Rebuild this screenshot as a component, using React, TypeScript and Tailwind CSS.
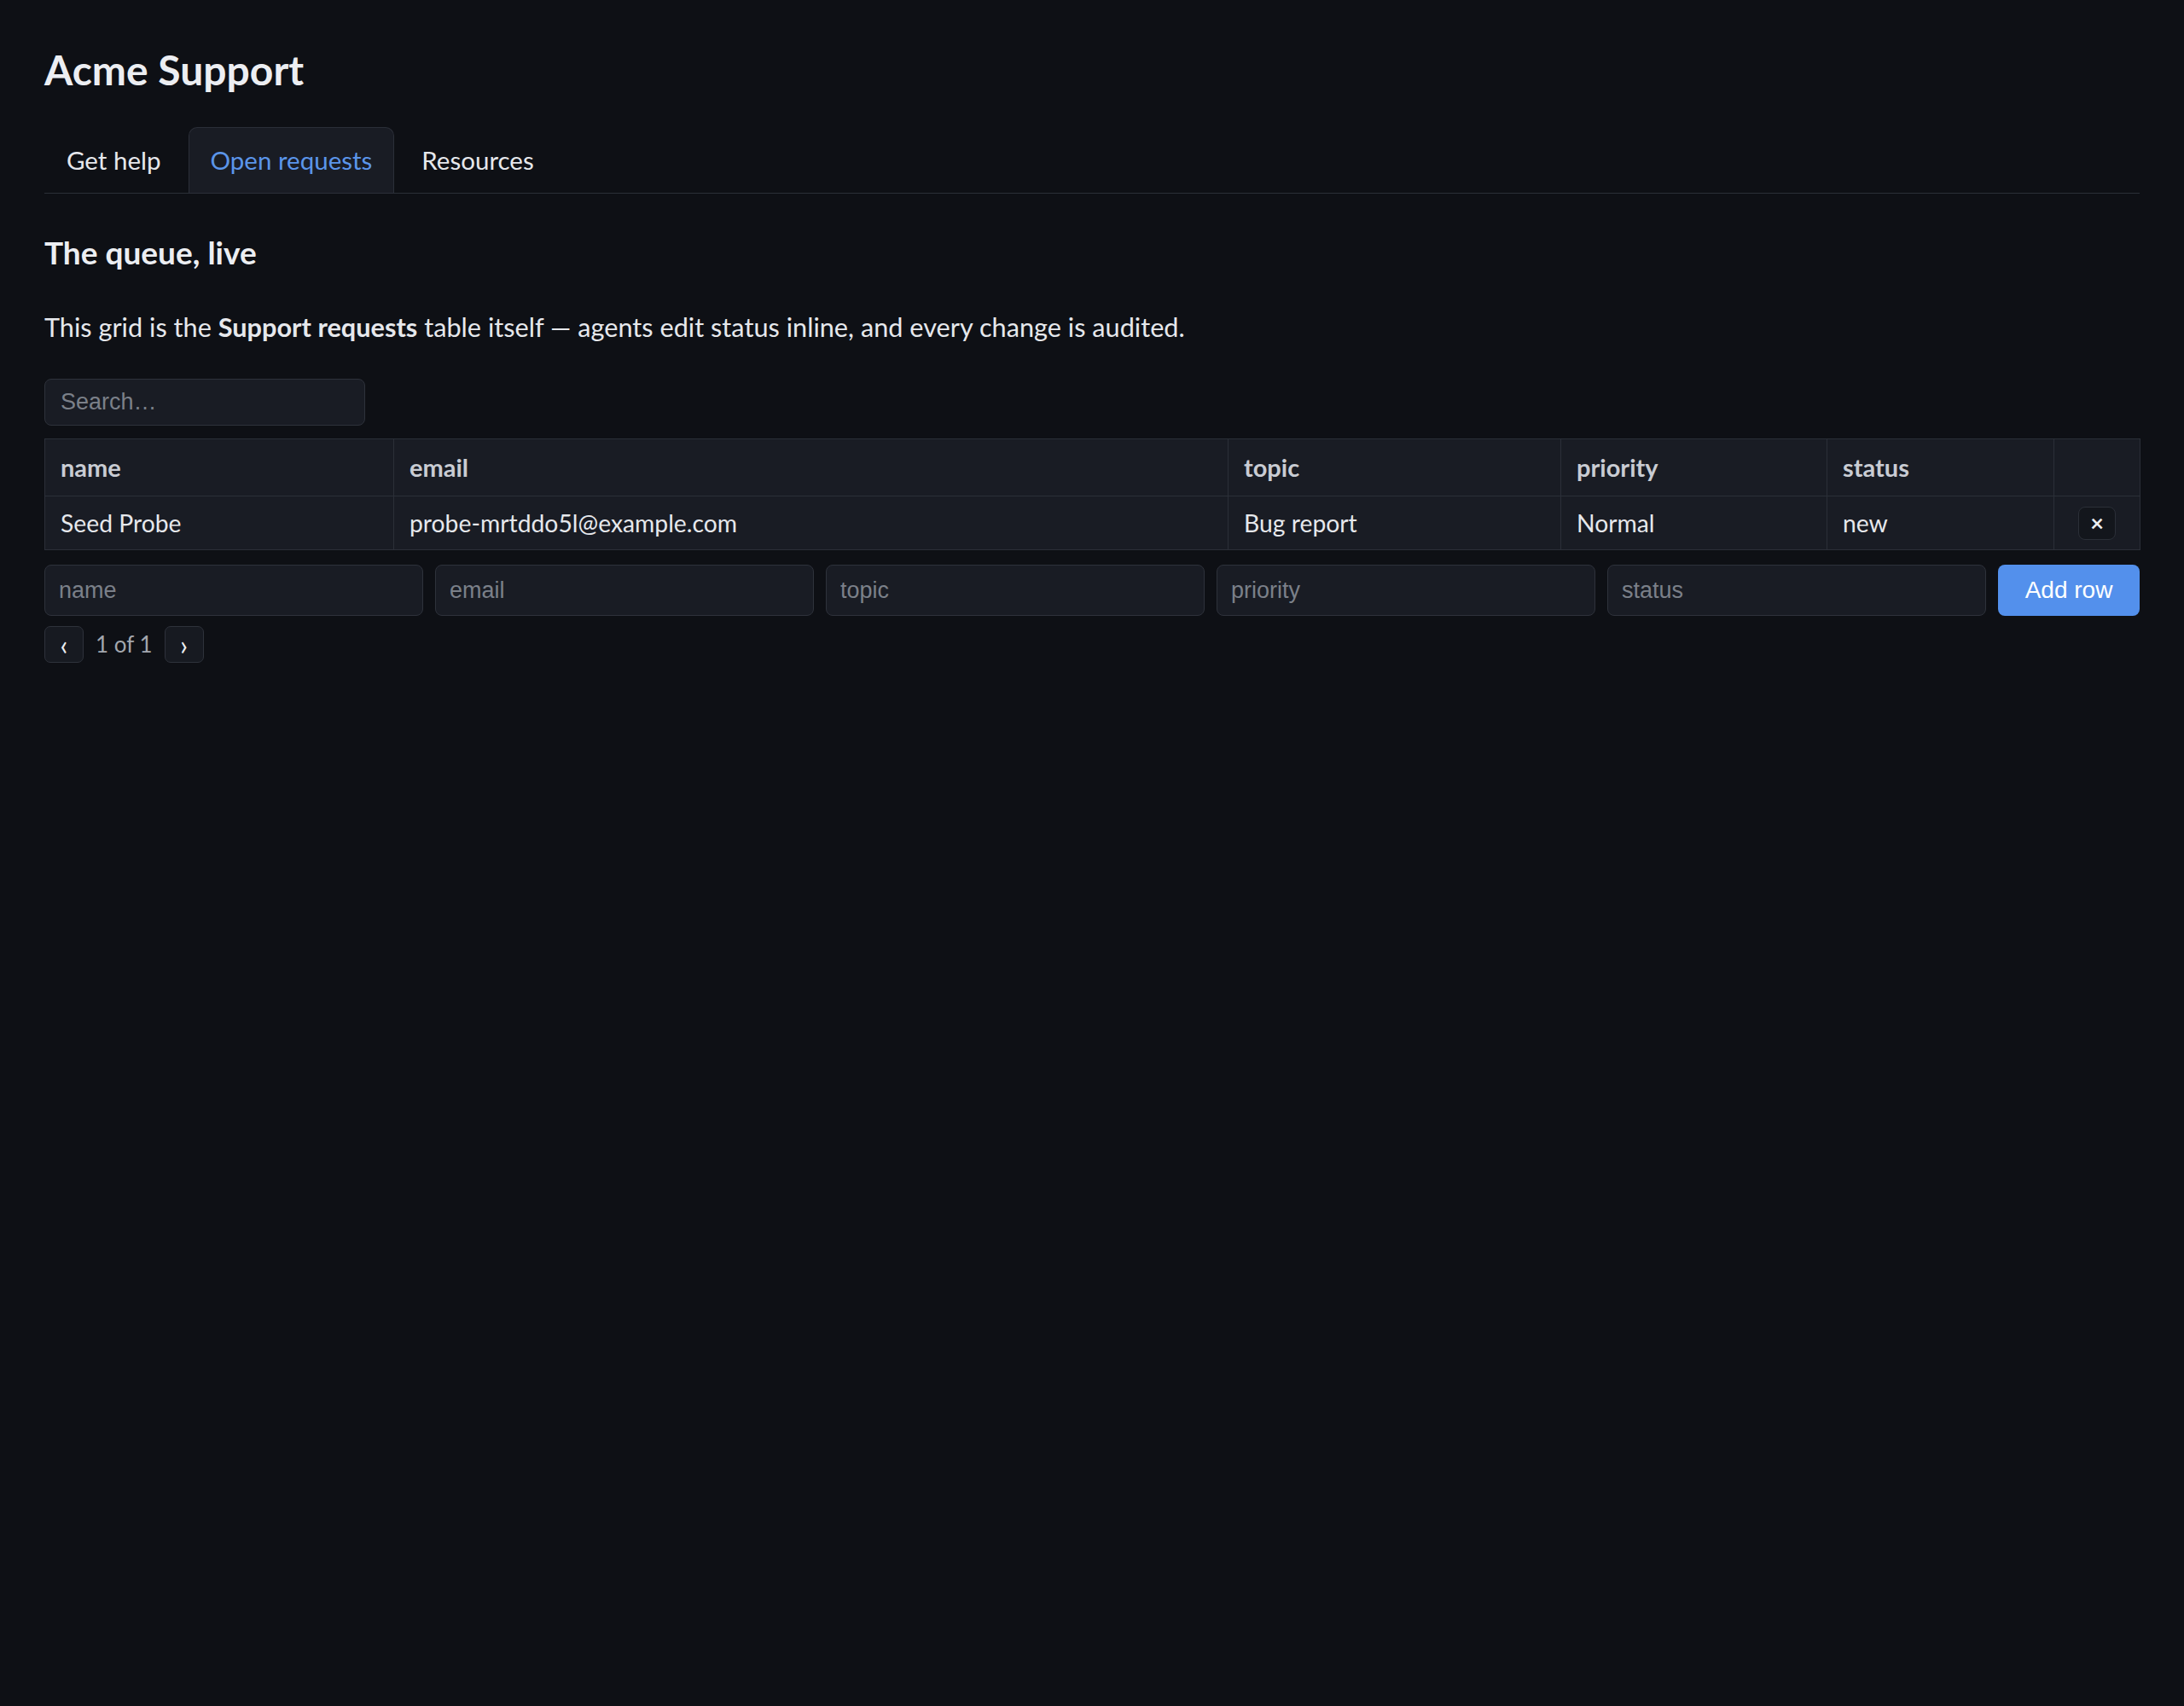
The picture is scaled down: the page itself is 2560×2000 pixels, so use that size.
import { useState } from "react";

const columns = [
  { key: "name", width: "w-[409px]" },
  { key: "email", width: "w-[978px]" },
  { key: "topic", width: "w-[390px]" },
  { key: "priority", width: "w-[312px]" },
  { key: "status", width: "w-[266px]" },
];

const rows = [
  {
    name: "Seed Probe",
    email: "probe-mrtddo5l@example.com",
    topic: "Bug report",
    priority: "Normal",
    status: "new",
  },
];

const tabs = ["Get help", "Open requests", "Resources"];

export default function App() {
  const [active, setActive] = useState("Open requests");
  const [query, setQuery] = useState("");

  return (
    <div className="min-h-screen bg-[#0e1015] px-[52px] pt-[54px] font-[family-name:'Segoe_UI',Lato,sans-serif] text-[#e6e8ec]">
      <h1 className="text-[48px] font-bold leading-[56px] text-[#eceef2]">Acme Support</h1>

      {/* Tabs */}
      <div className="mt-[39px] flex gap-[6px] border-b border-[#2b2f38]">
        {tabs.map((t) => {
          const on = t === active;
          return (
            <button
              key={t}
              onClick={() => setActive(t)}
              className={`h-[77px] rounded-t-[10px] border border-b-0 px-[25px] text-[29.5px] ${
                on
                  ? "border-[#2b2f38] bg-[#191c24] text-[#5b95ea]"
                  : "border-transparent text-[#e6e8ec]"
              }`}
            >
              {t}
            </button>
          );
        })}
      </div>

      <h2 className="mt-[46px] text-[37px] font-bold leading-[45px] text-[#eceef2]">The queue, live</h2>
      <p className="mt-[43px] text-[30.7px] leading-[45px]">
        This grid is the <strong className="font-bold">Support requests</strong> table itself — agents edit status
        inline, and every change is audited.
      </p>

      <input
        value={query}
        onChange={(e) => setQuery(e.target.value)}
        placeholder="Search…"
        className="mt-[38px] block h-[55px] w-[376px] rounded-[8px] border border-[#2e323b] bg-[#191c24] px-[18px] font-[family-name:'Liberation_Sans',Arial,sans-serif] text-[27px] text-[#e6e8ec] outline-none placeholder:text-[#7b8089]"
      />

      {/* Table */}
      <table className="mt-[15px] w-full table-fixed border-collapse bg-[#191c24]">
        <colgroup>
          {columns.map((c) => (
            <col key={c.key} className={c.width} />
          ))}
          <col className="w-[101px]" />
        </colgroup>
        <thead>
          <tr>
            {columns.map((c) => (
              <th
                key={c.key}
                className="h-[67px] border border-[#2b2f38] px-[18px] text-left text-[29px] font-bold text-[#c9ccd3]"
              >
                {c.key}
              </th>
            ))}
            <th className="border border-[#2b2f38]" />
          </tr>
        </thead>
        <tbody>
          {rows.map((r) => (
            <tr key={r.email}>
              <td className="h-[63px] border border-[#2b2f38] px-[18px] text-[28.3px]">{r.name}</td>
              <td className="border border-[#2b2f38] px-[18px] text-[28.3px]">{r.email}</td>
              <td className="border border-[#2b2f38] px-[18px] text-[28.3px]">{r.topic}</td>
              <td className="border border-[#2b2f38] px-[18px] text-[28.3px]">{r.priority}</td>
              <td className="border border-[#2b2f38] px-[18px] text-[28.3px]">{r.status}</td>
              <td className="border border-[#2b2f38] text-center">
                <button className="inline-flex h-[39px] w-[44px] items-center justify-center rounded-[8px] border border-[#2b2f38] bg-[#13161c] text-[27px] font-bold text-[#eceef2]">
                  ×
                </button>
              </td>
            </tr>
          ))}
        </tbody>
      </table>

      {/* Add row */}
      <div className="mt-[17px] flex gap-[14px]">
        {columns.map((c) => (
          <input
            key={c.key}
            placeholder={c.key}
            className="h-[60px] min-w-0 flex-1 rounded-[8px] border border-[#2e323b] bg-[#191c24] px-[16px] font-[family-name:'Liberation_Sans',Arial,sans-serif] text-[27px] text-[#e6e8ec] outline-none placeholder:text-[#7b8089]"
          />
        ))}
        <button className="h-[60px] w-[166px] rounded-[8px] bg-[#5390ec] font-[family-name:'Liberation_Sans',Arial,sans-serif] text-[28px] text-white">
          Add row
        </button>
      </div>

      {/* Pager */}
      <div className="mt-[12px] flex items-center gap-[14px] pb-[40px]">
        <button className="flex h-[43px] w-[46px] items-center justify-center rounded-[7px] border border-[#2e323b] bg-[#171a21] text-[32px] leading-none text-[#eceef2]">
          ‹
        </button>
        <span className="text-[26px] text-[#a3a7ae]">1 of 1</span>
        <button className="flex h-[43px] w-[46px] items-center justify-center rounded-[7px] border border-[#2e323b] bg-[#171a21] text-[32px] leading-none text-[#eceef2]">
          ›
        </button>
      </div>
    </div>
  );
}
